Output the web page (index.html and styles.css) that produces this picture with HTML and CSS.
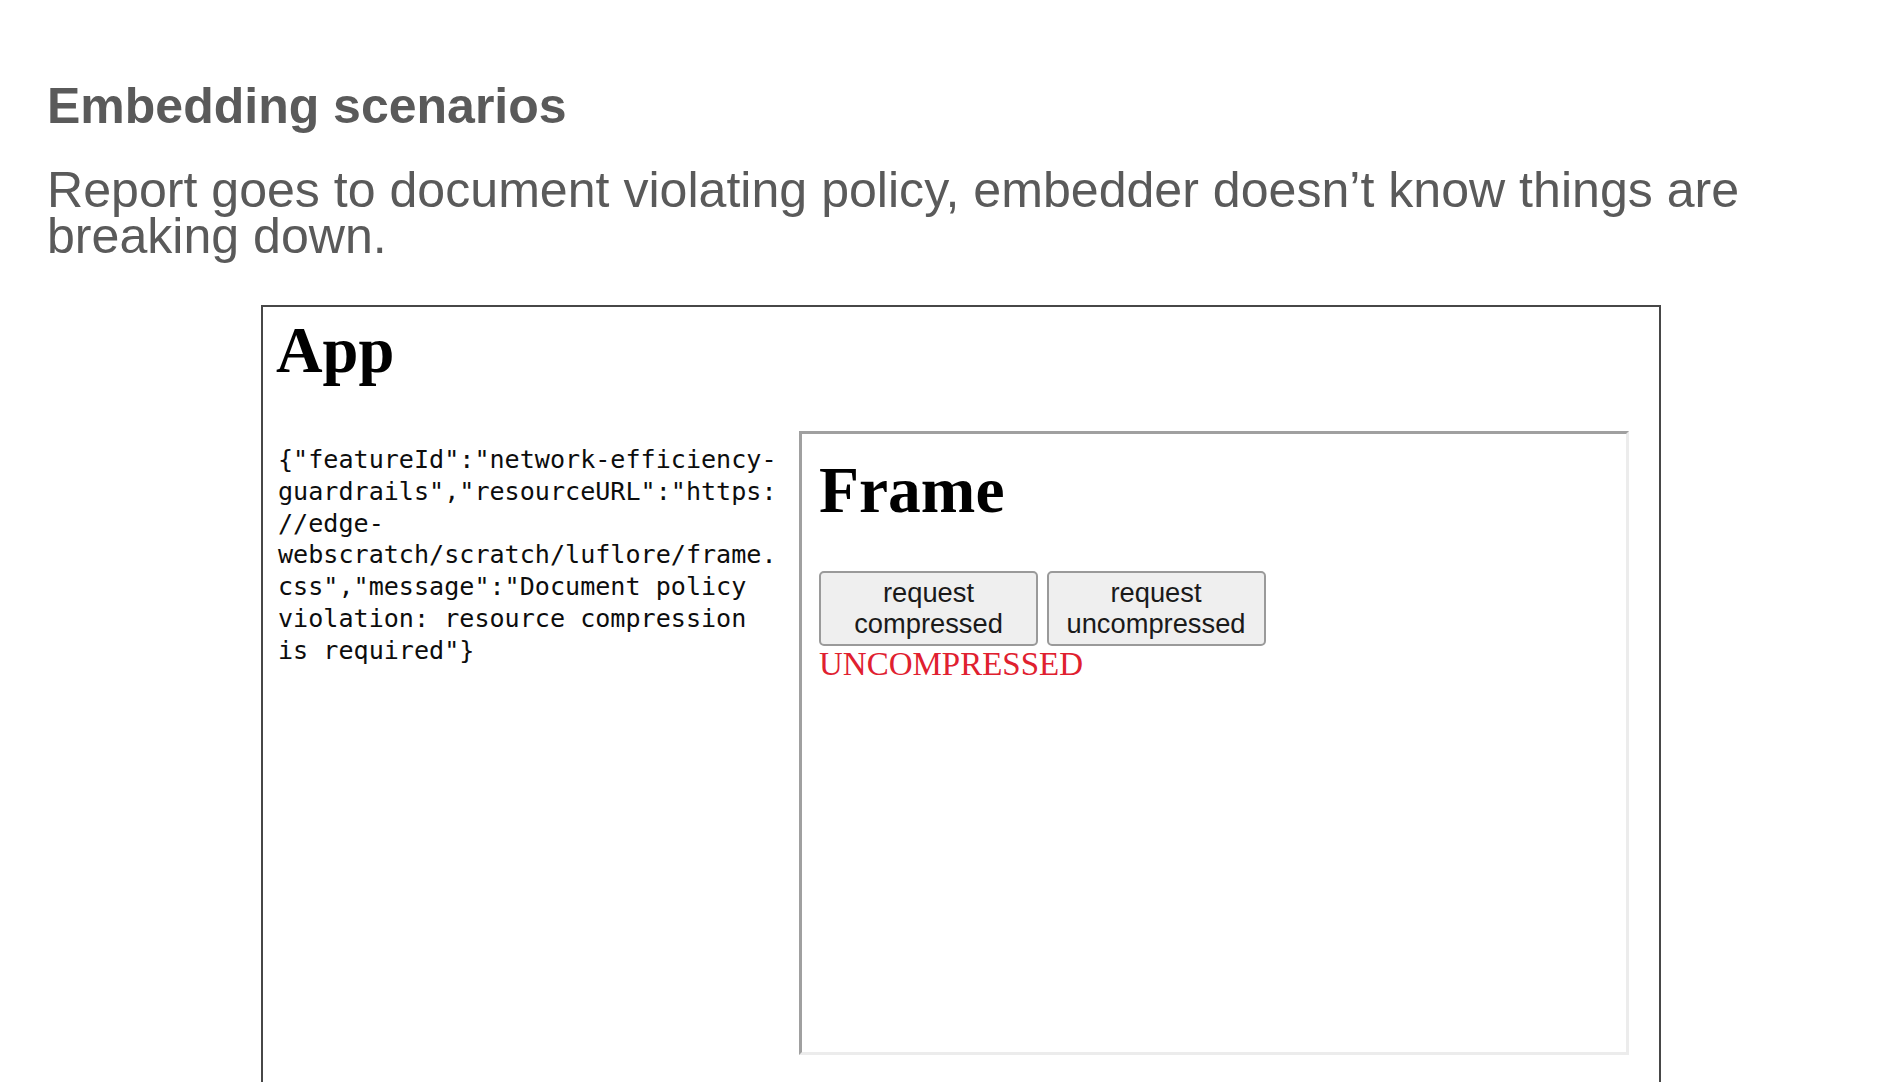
FILE: index.html
```html
<!DOCTYPE html>
<html lang="en">
<head>
<meta charset="utf-8">
<title>Embedding scenarios</title>
<link rel="stylesheet" href="styles.css">
</head>
<body>
<main class="slide">
  <h1 class="slide-title">Embedding scenarios</h1>
  <p class="slide-text">Report goes to document violating policy, embedder doesn’t know things are breaking down.</p>
  <section class="app">
    <h2 class="page-h1">App</h2>
    <div class="app-row">
      <pre class="report">{"featureId":"network-efficiency-
guardrails","resourceURL":"https:
//edge-
webscratch/scratch/luflore/frame.
css","message":"Document policy
violation: resource compression
is required"}</pre>
      <div class="frame">
        <h2 class="page-h1 frame-h1">Frame</h2>
        <div class="btns">
          <button class="btn" type="button">request compressed</button>
          <button class="btn" type="button">request uncompressed</button>
        </div>
        <div class="status">UNCOMPRESSED</div>
      </div>
    </div>
  </section>
</main>
</body>
</html>
```
FILE: styles.css
```css
html, body {
  margin: 0;
  padding: 0;
  background: #ffffff;
  overflow: hidden;
  height: 100%;
}

.slide {
  padding: 78px 0 0 47px;
  box-sizing: border-box;
  width: 1892px;
  height: 1082px;
}

.slide-title {
  margin: 0;
  font-family: "Liberation Sans", Arial, sans-serif;
  font-weight: bold;
  font-size: 50px;
  line-height: 57px;
  color: #5a5a5a;
}

.slide-text {
  margin: 32px 0 0 0;
  width: 1800px;
  font-family: "Liberation Sans", Arial, sans-serif;
  font-size: 50.1px;
  line-height: 46px;
  color: #5a5a5a;
}

.app {
  margin: 46px 0 0 214px;
  width: 1400px;
  height: 820px;
  box-sizing: border-box;
  border: 2px solid #474747;
  padding: 7px 0 0 13px;
  background: #fff;
}

.page-h1 {
  margin: 0 0 43px 0;
  font-family: "Liberation Serif", "Times New Roman", serif;
  font-weight: bold;
  font-size: 64.5px;
  line-height: 74px;
  color: #000;
}

.app-row {
  display: flex;
  align-items: flex-start;
}

.report {
  flex: none;
  width: 498px;
  margin: 13px 0 0 2px;
  font-family: "DejaVu Sans Mono", "Liberation Mono", monospace;
  font-size: 25.1px;
  line-height: 31.8px;
  color: #0d0d0d;
  white-space: pre;
}

.frame {
  flex: none;
  margin-left: 23px;
  width: 830px;
  height: 624px;
  box-sizing: border-box;
  border-style: solid;
  border-width: 3px;
  border-color: #a0a0a0 #ececec #ececec #a0a0a0;
  padding: 19px 0 0 17px;
}

.frame-h1 {
  margin-bottom: 44px;
  font-size: 65.5px;
}

.btns {
  display: flex;
  gap: 8.5px;
}

.btn {
  width: 219px;
  height: 75px;
  box-sizing: border-box;
  margin: 0;
  padding: 0 8px;
  border: 2px solid #9a9a9a;
  border-radius: 5px;
  background: #efefef;
  font-family: "Liberation Sans", Arial, sans-serif;
  font-size: 27.3px;
  line-height: 30.6px;
  color: #1a1a1a;
  text-align: center;
}

.status {
  font-family: "Liberation Serif", "Times New Roman", serif;
  font-size: 33px;
  line-height: 37px;
  color: #e0202f;
}
```
